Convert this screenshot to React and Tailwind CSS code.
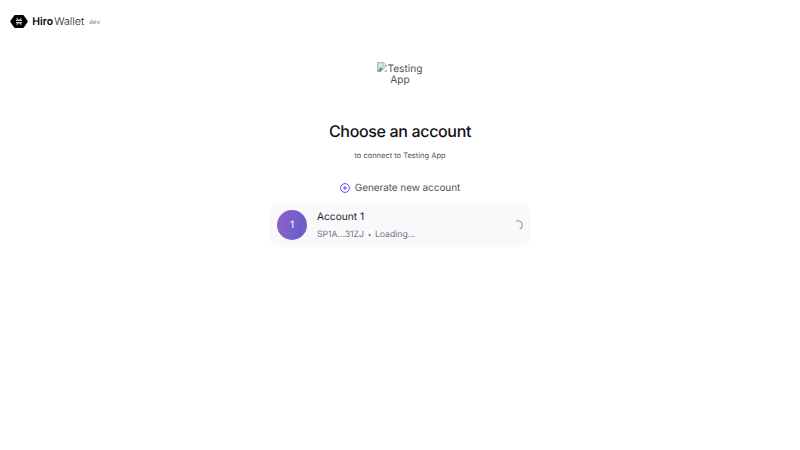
function HiroMark() {
  return (
    <svg className="h-[13px] w-[18px]" viewBox="0 0 18 13">
      <path d="M5.2 0h7.6q.8 0 1.2.7l3.5 5.1q.4.7 0 1.4L14 12.3q-.4.7-1.2.7H5.2q-.8 0-1.2-.7L.5 7.2q-.4-.7 0-1.4L4 .7Q4.400 0 5.200 0z" fill="#000" />
      <path d="M5.900 5.300h6.200M5.900 7.700h6.200M6.900 3.200l1.400 2.100M11.100 3.200L9.700 5.300M6.900 9.800l1.400-2.100M11.100 9.800L9.700 7.700" stroke="#fff" strokeWidth=".95" fill="none" />
    </svg>
  );
}

function BrokenImage() {
  return (
    <svg className="h-[10px] w-[10px] shrink-0" viewBox="0 0 10 10">
      <path d="M.5.500h5.700l3.300 3v6h-9z" fill="#c3d8f5" stroke="#a5a8ad" strokeWidth=".8" />
      <path d="M1 8.500l3-3.300 2 1.600L3.500 9.200H1z" fill="#4fa445" />
      <path d="M6.200.500v3h3.300z" fill="#f4f4f4" stroke="#a5a8ad" strokeWidth=".5" />
      <path d="M4 10l6-5.500V7L7 10z" fill="#fff" />
      <ellipse cx="3.400" cy="3.200" rx="1.400" ry=".8" fill="#fff" />
    </svg>
  );
}

export default function App() {
  return (
    <div className="flex h-[450px] w-[800px] flex-col overflow-hidden bg-white font-['Inter',sans-serif] text-[#242629] [text-rendering:geometricPrecision]">
      <header className="flex h-[42px] shrink-0 items-center pl-[10px]">
        <HiroMark />
        <svg className="ml-1 h-4 w-[54px]" viewBox="0 0 54 16">
          <text x="0.300" y="12" fontSize="10.800" fontWeight="600" fill="#000" textLength="20.700" lengthAdjust="spacingAndGlyphs">Hiro</text>
          <text x="22.200" y="12" fontSize="10.800" fontWeight="300" fill="#222" textLength="30" lengthAdjust="spacingAndGlyphs">Wallet</text>
        </svg>
        <span className="ml-[3px] mt-1 font-['Liberation_Mono',monospace] text-[6.300px] leading-[8px] text-[#74777d]">dev</span>
      </header>
      <main className="flex flex-col items-center pt-5">
        <div className="flex h-[50px] w-[50px] flex-col items-center text-[10.200px] text-[#50545b]">
          <div className="flex h-[12px] whitespace-nowrap">
            <BrokenImage />
            <span className="pt-[2px] leading-[10px]">Testing</span>
          </div>
          <span className="leading-[12px]">App</span>
        </div>
        <h1 className="mt-[8px] text-[16px] font-medium leading-[22px] tracking-[-0.34px] text-[#101113]">Choose an account</h1>
        <p className="mt-[8px] text-[7.500px] leading-[12px] text-[#50545b]">to connect to Testing App</p>
        <div className="mt-[19px] flex h-[14px] items-center gap-[5px] text-[10px] text-[#50545b]">
          <svg className="h-[10px] w-[10px]" viewBox="0 0 10 10" fill="none" stroke="#5546ff" strokeWidth=".95">
            <circle cx="5" cy="5" r="4.400" />
            <path d="M5 3v4M3 5h4" />
          </svg>
          <span className="tracking-[-0.08px]">Generate new account</span>
        </div>
        <section className="mt-[8px] flex h-[44px] w-[262px] items-center rounded-[10px] bg-[#f9f9fb] pl-2 pr-[8px]">
          <div className="flex h-[30px] w-[30px] items-center justify-center rounded-full bg-[linear-gradient(100deg,#9061c7_0%,#7360ca_60%,#6b5ccb_75%,#815cc5_100%)] text-[10px] text-white">1</div>
          <div className="ml-[10px] flex-1">
            <div className="text-[10.200px] leading-[14px] text-[#242629]">Account 1</div>
            <div className="mt-[5px] flex text-[8.750px] leading-[12px] tracking-[-0.07px] text-[#74777d]">
              <span>SP1A…31ZJ</span>
              <span className="w-[11px] text-center text-[6.500px]">•</span>
              <span>Loading...</span>
            </div>
          </div>
          <svg className="h-[10px] w-[10px]" viewBox="0 0 10 10" fill="none">
            <path d="M3.200 1C7 0 9.800 2.700 9.200 5.800C8.900 7.200 8.100 8.200 7 8.900" stroke="#96989e" strokeWidth="1.200" strokeLinecap="round" />
          </svg>
        </section>
      </main>
    </div>
  );
}
